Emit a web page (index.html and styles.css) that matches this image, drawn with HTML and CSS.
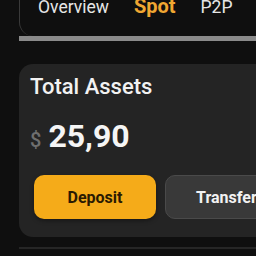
FILE: index.html
```html
<!DOCTYPE html>
<html>
<head>
<meta charset="utf-8">
<link rel="stylesheet" href="styles.css">
</head>
<body>
<div class="page">
  <div class="tabs">
    <span class="tab">Overview</span>
    <span class="tab active">Spot</span>
    <span class="tab">P2P</span>
  </div>
  <div class="tabbar"></div>
  <div class="card">
    <div class="title">Total Assets</div>
    <div class="amount"><span class="cur">$</span><span class="val">25,90</span></div>
    <div class="actions">
      <button class="btn primary">Deposit</button>
      <button class="btn secondary">Transfer</button>
    </div>
  </div>
  <div class="divider"></div>
</div>
</body>
</html>
```
FILE: styles.css
```css
html, body {
  margin: 0;
  padding: 0;
  background: #0f0f0f;
  overflow: hidden;
  width: 256px;
  height: 256px;
}
.page {
  padding-left: 19px;
  width: 320px;
  font-family: Roboto, "Liberation Sans", sans-serif;
}
.tabs {
  display: flex;
  align-items: baseline;
  gap: 25px;
  height: 36px;
  box-sizing: border-box;
  padding-left: 18px;
  border-left: 1px solid #3a3a3a;
  border-bottom-left-radius: 14px;
}
.tab {
  font-size: 17.5px;
  line-height: 13px;
  color: #e6e6e6;
}
.tab.active {
  color: #f0a732;
  font-weight: 700;
  font-size: 20px;
}
.tabbar {
  height: 5px;
  background: #8a8a8a;
}
.card {
  margin-top: 23px;
  width: 290px;
  background: #242424;
  border-radius: 14px;
  padding: 10px 0 18px 11px;
  box-sizing: border-box;
}
.title {
  font-size: 22px;
  line-height: 26px;
  font-weight: 500;
  color: #f2f2f2;
}
.amount {
  margin-top: 18px;
  display: flex;
  align-items: baseline;
  gap: 7px;
  line-height: 36px;
}
.cur {
  font-size: 20px;
  color: #6f6f6f;
  font-weight: 500;
}
.val {
  font-size: 32px;
  font-weight: 700;
  color: #f5f5f5;
}
.actions {
  margin-top: 17px;
  margin-left: 4px;
  display: flex;
  gap: 9px;
}
.btn {
  width: 122px;
  height: 44px;
  border-radius: 10px;
  font-family: Roboto, "Liberation Sans", sans-serif;
  font-size: 16px;
  font-weight: 700;
  box-sizing: border-box;
  flex: none;
}
.btn.primary {
  background: #f5ab19;
  color: #2a1a02;
  border: none;
  box-shadow: 0 2px 4px rgba(0,0,0,0.35);
}
.btn.secondary {
  background: #393939;
  color: #f2f2f2;
  border: 1px solid #4a4a4a;
  padding-left: 30px;
  text-align: left;
}
.divider {
  margin-top: 10px;
  height: 2px;
  background: #262626;
}
```
